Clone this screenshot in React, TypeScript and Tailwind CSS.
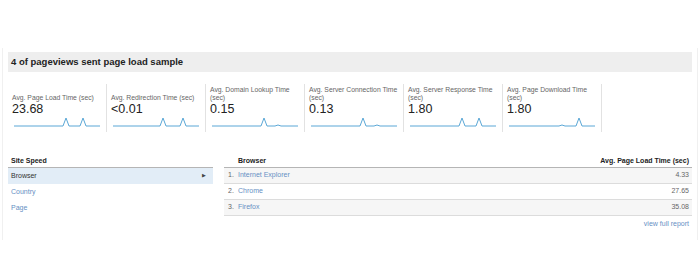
const metrics = [
  { label: "Avg. Page Load Time (sec)", value: "23.68", line: "0,10 49,10 52,2 55,10 66,10 69,2 72,10 86,10" },
  { label: "Avg. Redirection Time (sec)", value: "<0.01", line: "0,10 47,10 50,2 53,10 67,10 70,2 73,10 86,10" },
  { label: "Avg. Domain Lookup Time (sec)", value: "0.15", line: "0,10 49,10 52,2 55,10 63,10 66,9 69,10 86,10" },
  { label: "Avg. Server Connection Time (sec)", value: "0.13", line: "0,10 49,10 52,2 55,10 63,10 66,9 69,10 86,10" },
  { label: "Avg. Server Response Time (sec)", value: "1.80", line: "0,10 49,10 52,2 55,10 66,10 69,2 72,10 86,10" },
  { label: "Avg. Page Download Time (sec)", value: "1.80", line: "0,10 50,10 53,9 56,10 67,10 70,2 73,10 86,10" },
];

const browsers = [
  { name: "Internet Explorer", time: "4.33" },
  { name: "Chrome", time: "27.65" },
  { name: "Firefox", time: "35.08" },
];

function Sparkline({ points }: { points: string }) {
  return (
    <svg width="86" height="12" viewBox="0 0 86 12" className="ml-[6px]">
      <polyline points={points} fill="none" stroke="#5aa7d6" strokeWidth="1" strokeLinejoin="round" />
    </svg>
  );
}

export default function App() {
  return (
    <div className="w-[700px] h-[280px] bg-white pt-[48px] font-['Liberation_Sans',Arial,sans-serif]">
      <div className="mx-[2px] h-[192px] border-x border-[#f0f0f0] px-[5px] pt-[4px]">
        {/* Title bar */}
        <div className="flex h-[20px] items-center bg-[#eeeeee] px-[3px] text-[9.5px] font-bold text-[#222]">
          4 of pageviews sent page load sample
        </div>

        {/* Metric cards */}
        <div className="mt-[12px] flex">
          {metrics.map((m) => (
            <div key={m.label} className="flex h-[48px] w-[99px] flex-col border-r border-[#e2e2e2]">
              <div className="flex h-[18px] items-end pl-[4px] pr-[5px] text-[6.8px] leading-[8px] text-[#666]">
                {m.label}
              </div>
              <div className="mt-[1px] pl-[4px] text-[12.5px] leading-[13px] text-[#222]">{m.value}</div>
              <Sparkline points={m.line} />
            </div>
          ))}
        </div>

        {/* Site speed + table */}
        <div className="mt-[23px] flex gap-[11px] text-[7px]">
          <div className="w-[205px]">
            <div className="flex h-[13px] items-center border-b border-[#b5b5b5] px-[3px] font-bold text-[#222]">
              Site Speed
            </div>
            <div className="flex h-[16px] items-center justify-between bg-[#e2edf7] px-[3px] text-[#333]">
              <span>Browser</span>
              <span className="pr-[4px] text-[5px] text-[#444]">▶</span>
            </div>
            <div className="flex h-[16px] items-center px-[3px] text-[#6690c4]">Country</div>
            <div className="flex h-[16px] items-center px-[3px] text-[#6690c4]">Page</div>
          </div>

          <div className="flex-1">
            <div className="flex h-[13px] items-center justify-between border-b border-[#b5b5b5] pl-[14px] pr-[3px] font-bold text-[#222]">
              <span>Browser</span>
              <span>Avg. Page Load Time (sec)</span>
            </div>
            {browsers.map((b, i) => (
              <div
                key={b.name}
                className={`flex h-[16px] items-center justify-between border-b border-[#dcdcdc] pl-[4px] pr-[3px] ${
                  i % 2 === 0 ? "bg-[#f6f6f6]" : "bg-white"
                }`}
              >
                <span className="flex">
                  <span className="w-[10px] text-[#666]">{i + 1}.</span>
                  <span className="text-[#6690c4]">{b.name}</span>
                </span>
                <span className="text-[#666]">{b.time}</span>
              </div>
            ))}
            <div className="mt-[3px] pr-[3px] text-right text-[#6690c4]">view full report</div>
          </div>
        </div>
      </div>
    </div>
  );
}
